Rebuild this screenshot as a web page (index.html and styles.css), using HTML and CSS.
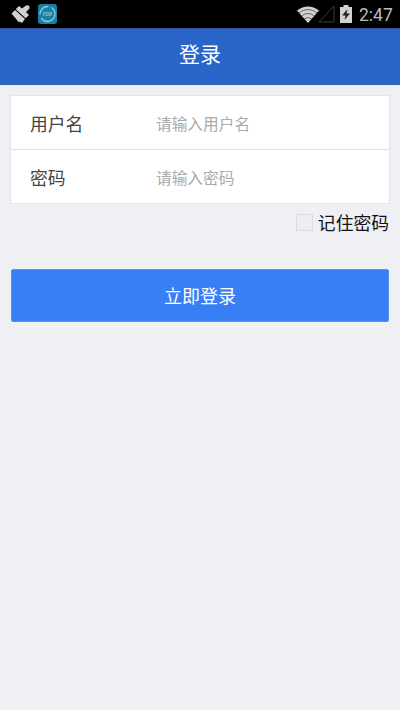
FILE: index.html
```html
<!DOCTYPE html>
<html lang="zh-CN">
<head>
<meta charset="utf-8">
<title>登录</title>
<link rel="stylesheet" href="styles.css">
</head>
<body>
<div class="status">
  <svg class="brush" width="20" height="20" viewBox="0 0 20 20">
    <path d="M0.500 9.500 L4 6 L14 15 L11 19 L8.500 17.500 L8 18.500Z" fill="#d0d0d0"/>
    <path d="M4.700 5.300 L8 2 L11 4.500 L15 1.500 Q19 0.500 18.500 4.500 L15 8 L18 11 L14.700 14.300Z" fill="#d0d0d0"/>
  </svg>
  <div class="app">
    <svg class="ring" width="19" height="20" viewBox="0 0 19 20" fill="none">
      <circle cx="9.500" cy="10" r="7.500" stroke="#8fcce0" stroke-width="1.300" stroke-dasharray="19 4 13 3"/>
    </svg>
    <span>rox</span>
  </div>
  <div class="tray">
    <svg class="wifi" width="22" height="17" viewBox="0 0 22 17">
      <path d="M0 4.500 Q11 -3.500 22 4.500 L11 17Z" fill="#d2d2d2"/>
      <path d="M1.500 7 Q11 0 20.500 7 M4.500 10 Q11 5 17.500 10 M7 13 Q11 10 15 13" fill="none" stroke="#333" stroke-width=".7"/>
    </svg>
    <svg class="signal" width="17" height="18" viewBox="0 0 17 18">
      <path d="M1 17 L16 1 V17Z" fill="none" stroke="#3c3c3c"/>
    </svg>
    <svg class="battery" width="12" height="18" viewBox="0 0 12 18">
      <path d="M0 2 H3.500 V0 H8.500 V2 H12 V18 H0Z" fill="#d2d2d2"/>
      <path d="M7.500 4 L2 10.500 H5.500 L4.500 15 L10 8.500 H6.500Z" fill="#222"/>
    </svg>
    <time>2:47</time>
  </div>
</div>
<header class="title">登录</header>
<main>
  <form>
    <div class="fields">
      <label class="row"><span>用户名</span><input type="text" placeholder="请输入用户名"></label>
      <label class="row"><span>密码</span><input type="password" placeholder="请输入密码"></label>
    </div>
    <label class="remember"><input type="checkbox"><span>记住密码</span></label>
    <button type="button">立即登录</button>
  </form>
</main>
</body>
</html>
```
FILE: styles.css
```css
* { box-sizing: border-box; }
body {
  margin: 0;
  min-height: 710px;
  background: #eef0f4;
  font-family: "Noto Sans CJK SC", sans-serif;
}
.status {
  display: flex;
  align-items: center;
  height: 28px;
  padding: 0 7px 0 11px;
  background: #000;
}
.app {
  display: grid;
  place-items: center;
  width: 19px;
  height: 20px;
  margin-left: 7px;
  border-radius: 3px;
  background: #1681a1;
  color: #a9d9e6;
  font: italic 7px/20px Roboto, sans-serif;
}
.app > * { grid-area: 1 / 1; }
.tray { display: flex; align-items: center; margin-left: auto; }
.wifi { margin-right: -1px; }
.battery { margin-left: 5px; }
time {
  width: 34px;
  margin: 2px 0 0 7px;
  color: #bdbdbd;
  font: 400 17.500px/26px Roboto, sans-serif;
}
.title {
  height: 57px;
  background: #2a66ca;
  border-top: 1px solid #344f9a;
  border-bottom: 1px solid #3060b4;
  color: #fff;
  font-size: 21px;
  line-height: 49px;
  text-align: center;
}
main { padding: 10px 10px 0; }
.fields { background: #fff; border: 1px solid #e1e3e8; }
.row {
  display: flex;
  align-items: center;
  height: 53px;
  padding: 1px 18px 0 19px;
  color: #444;
  font-size: 17.800px;
}
.row + .row { height: 54px; border-top: 1px solid #e1e2e6; }
.row span { width: 126px; }
.row input {
  flex: 1;
  min-width: 0;
  padding: 2px 0 0;
  border: 0;
  outline: 0;
  background: none;
  color: #444;
  font: 15.700px/24px "Noto Sans CJK SC", sans-serif;
}
.row input::placeholder { color: #aaa; opacity: 1; }
.remember {
  display: flex;
  align-items: center;
  justify-content: flex-end;
  gap: 5px;
  height: 36px;
  margin-right: 1px;
  color: #111;
  font-size: 17.800px;
}
.remember input {
  appearance: none;
  width: 17px;
  height: 17px;
  margin: 0;
  border: 1px solid #d9dbdf;
  background: #eceef1;
}
button {
  display: block;
  width: 378px;
  height: 53px;
  margin: 29px 0 0 1px;
  padding: 0;
  border: 1px solid #5792ed;
  border-radius: 2px;
  background: #387ef5;
  color: #fff;
  font: 18px/27px "Noto Sans CJK SC", sans-serif;
}
```
